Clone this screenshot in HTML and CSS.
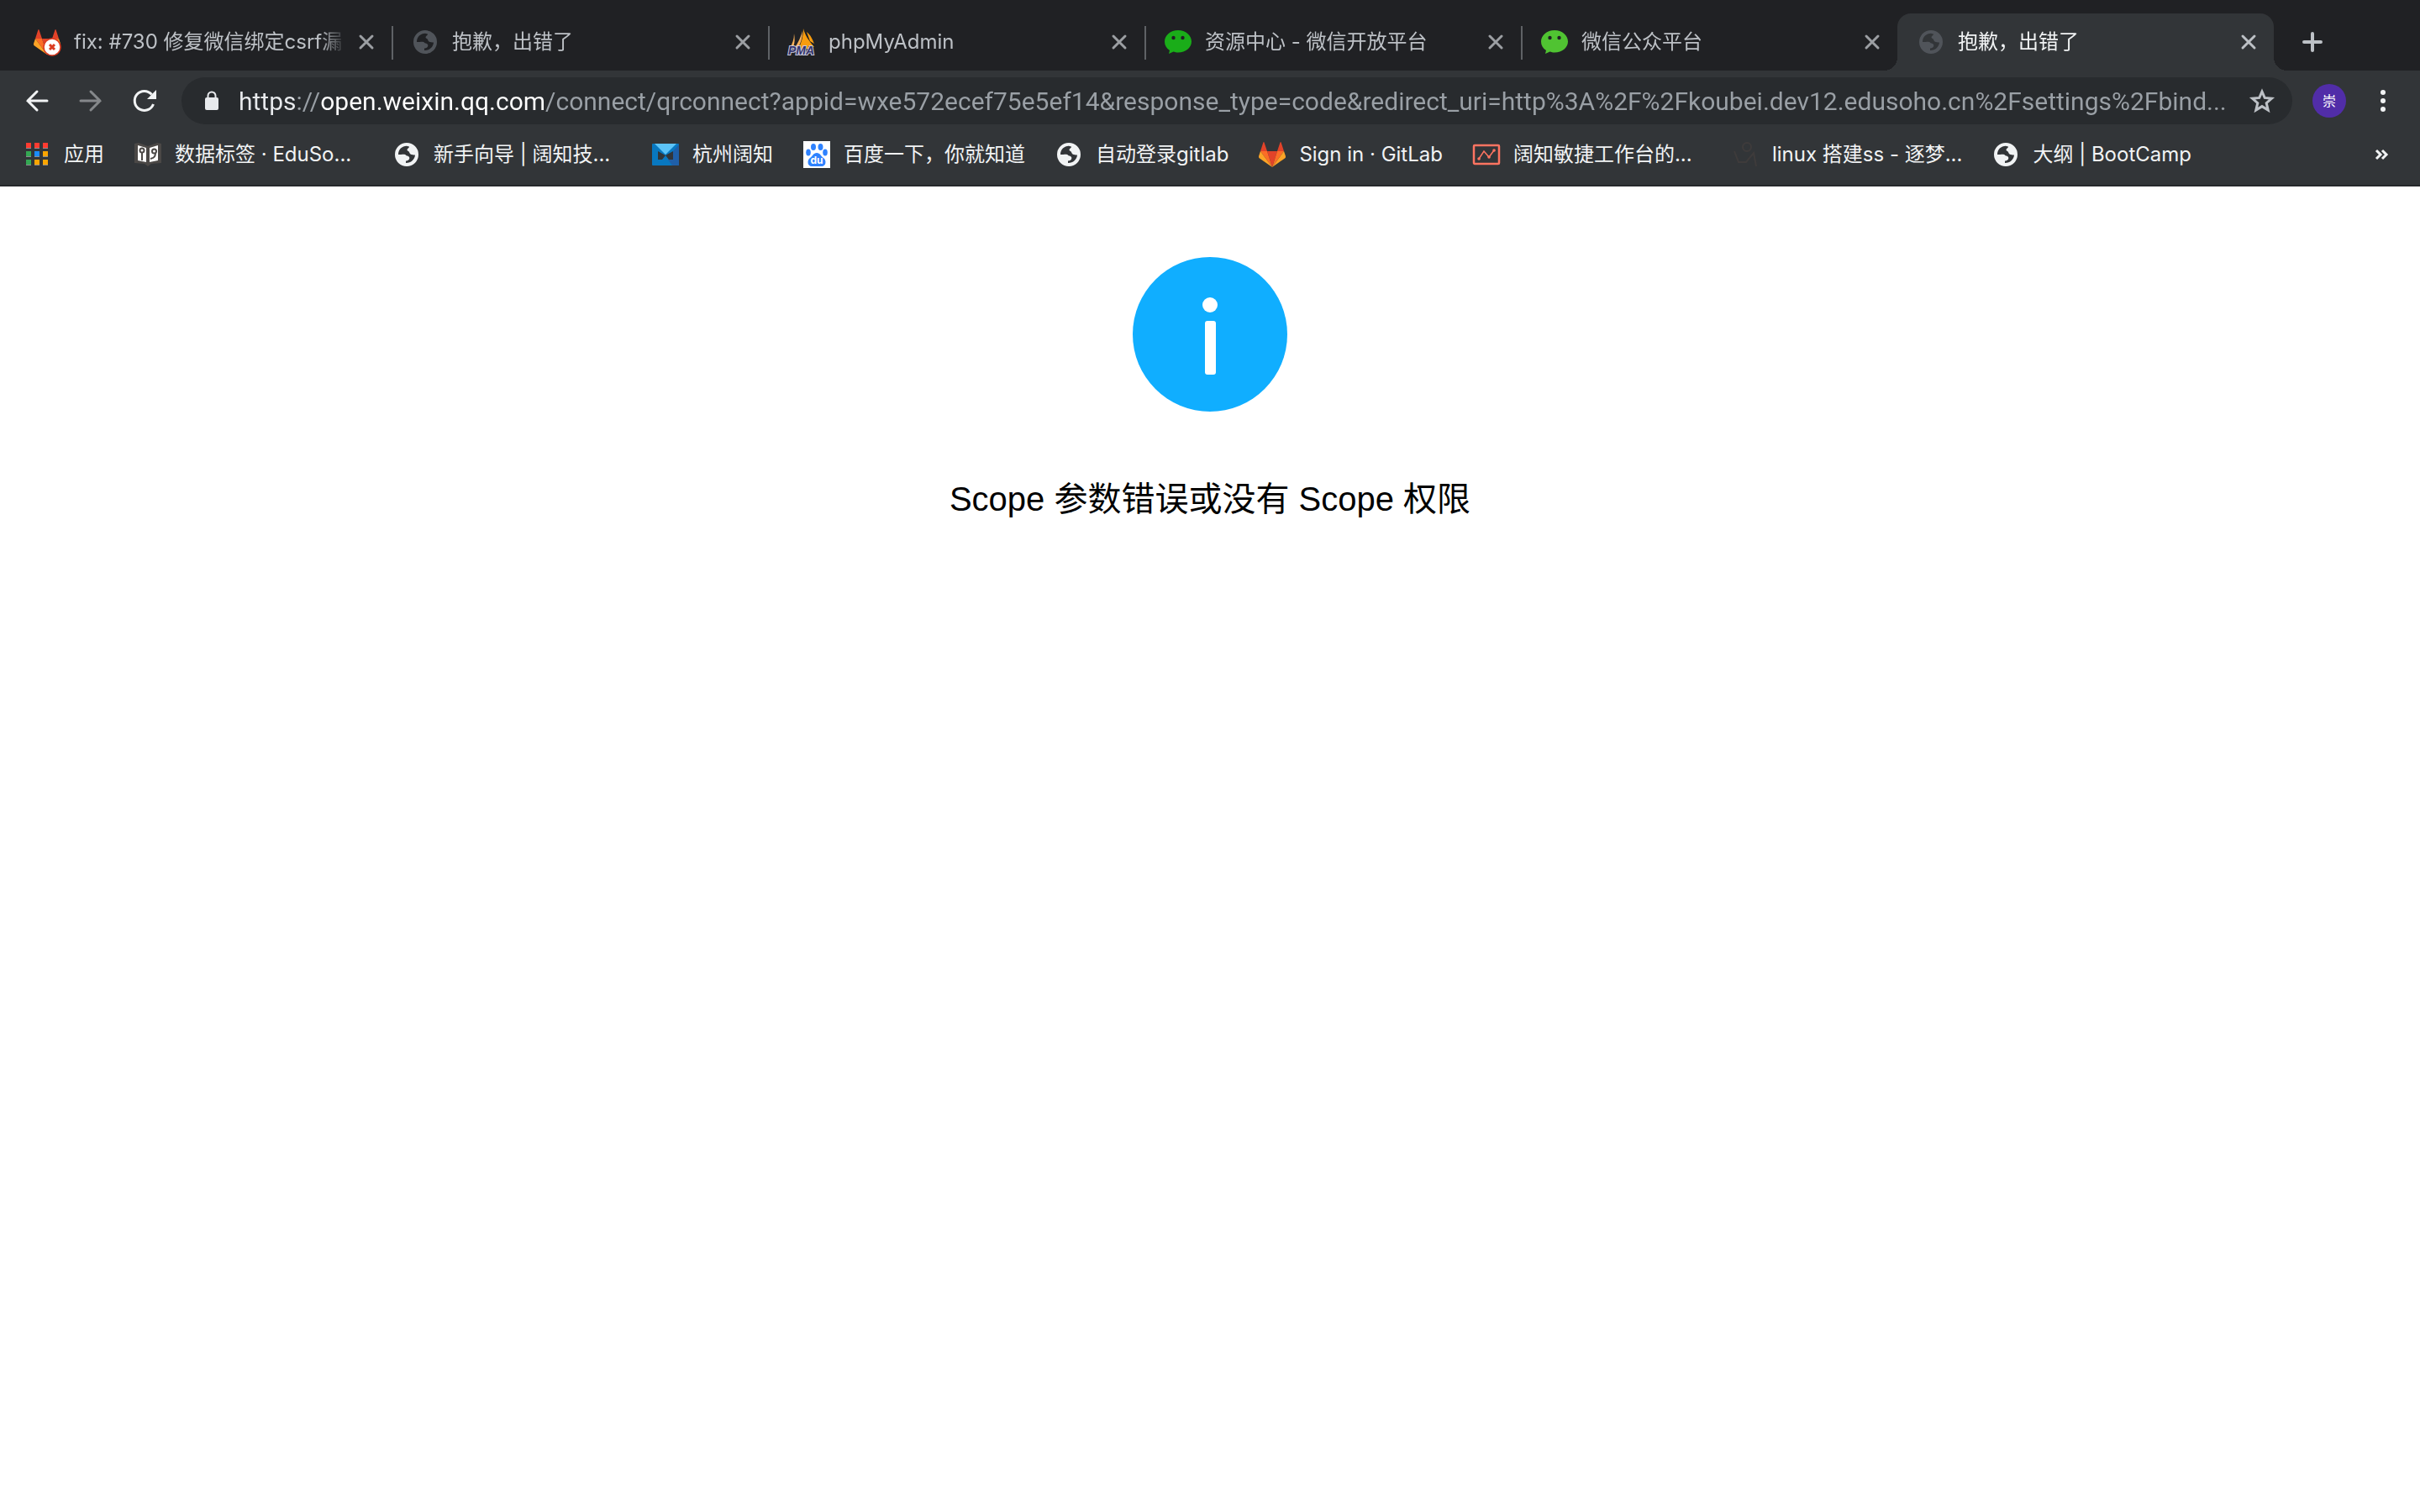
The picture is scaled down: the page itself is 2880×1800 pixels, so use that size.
FILE: index.html
```html
<!DOCTYPE html>
<html lang="zh-CN">
<head>
    <meta charset="UTF-8">
    <meta name="viewport" content="width=device-width, initial-scale=1.0">
    <title>抱歉，出错了</title>
    <link rel="stylesheet" href="styles.css">
</head>
<body>

<svg class="sprite" aria-hidden="true">
    <symbol id="close" viewBox="0 0 32 32">
        <path d="M9 9l14 14M23 9L9 23" fill="none" stroke="currentColor" stroke-width="3" stroke-linecap="round"/>
    </symbol>
    <symbol id="globe" viewBox="0 0 32 32">
        <path fill="currentColor" fill-rule="evenodd" d="M16 2a14 14 0 1 1 0 28a14 14 0 1 1 0-28zM6 16C6 10 10.500 5.800 16 5.800L19 6.500C19 8.500 16.500 8.500 16.500 10.500C16.500 12 18.500 11.500 19 13C19.500 15.500 21.500 16.500 26 16.500C25.500 22 21 26.200 15 26V23.500C18.500 23.500 20 21 19 19C18 17 15.500 18 15 16.500C14 15 10 16 6 16z"/>
    </symbol>
    <symbol id="gitlab" viewBox="0 0 32 32">
        <path fill="#e24329" d="M16 31L22 12H10z"/>
        <path fill="#fc6d26" d="M16 31L10 12H2zM16 31L22 12H30z"/>
        <path fill="#fca326" d="M2 12L0 18c0 1 0 2 1 2.500L16 31zM30 12L32 18c0 1 0 2-1 2.500L16 31z"/>
        <path fill="#e24329" d="M2 12H10L6.500 1.500C6.200.8 5.600.8 5.400 1.500zM30 12H22L25.500 1.500C25.800.8 26.400.8 26.600 1.500z"/>
    </symbol>
    <symbol id="wechat" viewBox="0 0 32 32">
        <path fill="currentColor" d="M16 2C7 2 0 8 0 15.500C0 20 2.300 23.500 6 26L5 30L10.500 27.500C12 28 14 28.500 16 28.500C25 28.500 32 22.800 32 15.500S25 2 16 2z"/>
        <circle cx="10.500" cy="11" r="2.200" fill="#202124"/>
        <circle cx="21.500" cy="11" r="2.200" fill="#202124"/>
    </symbol>
</svg>

<header class="browser">
    <nav class="tabs" aria-label="标签页">
        <div class="tab">
            <a class="tab-link" href="#">
                <svg class="icon" viewBox="0 0 32 32">
                    <use href="#gitlab"/>
                    <circle cx="22" cy="22" r="10" fill="#fff" stroke="#db3b21" stroke-width="1.500"/>
                    <path d="M19 19l6 6M25 19l-6 6" stroke="#db3b21" stroke-width="3"/>
                </svg>
                <span class="tab-title">fix: #730 修复微信绑定csrf漏</span>
            </a>
            <button class="close" aria-label="关闭"><svg class="icon"><use href="#close"/></svg></button>
        </div>
        <div class="tab">
            <a class="tab-link" href="#">
                <svg class="icon muted"><use href="#globe"/></svg>
                <span class="tab-title">抱歉，出错了</span>
            </a>
            <button class="close" aria-label="关闭"><svg class="icon"><use href="#close"/></svg></button>
        </div>
        <div class="tab">
            <a class="tab-link" href="#">
                <svg class="icon" viewBox="0 0 32 32">
                    <path fill="#f89c0e" d="M18 0C20 8 25 15 31 22L24 21L25 24H12C16 17 18 9 18 0zM22 4C27 8 29 13 31 18L26 15z"/>
                    <path fill="#fbb25a" d="M17 3C17 11 15 18 11 24H7C12 17 15 10 17 3zM7 6C7 13 5 18 2 23L6 22C8 17 8 12 7 6z"/>
                    <text class="pma" x="0" y="31">PMA</text>
                </svg>
                <span class="tab-title">phpMyAdmin</span>
            </a>
            <button class="close" aria-label="关闭"><svg class="icon"><use href="#close"/></svg></button>
        </div>
        <div class="tab">
            <a class="tab-link" href="#">
                <svg class="icon wechat"><use href="#wechat"/></svg>
                <span class="tab-title">资源中心 - 微信开放平台</span>
            </a>
            <button class="close" aria-label="关闭"><svg class="icon"><use href="#close"/></svg></button>
        </div>
        <div class="tab">
            <a class="tab-link" href="#">
                <svg class="icon wechat-light"><use href="#wechat"/></svg>
                <span class="tab-title">微信公众平台</span>
            </a>
            <button class="close" aria-label="关闭"><svg class="icon"><use href="#close"/></svg></button>
        </div>
        <div class="tab active">
            <a class="tab-link" href="#" aria-current="page">
                <svg class="icon muted"><use href="#globe"/></svg>
                <span class="tab-title">抱歉，出错了</span>
            </a>
            <button class="close" aria-label="关闭"><svg class="icon"><use href="#close"/></svg></button>
        </div>
        <button class="new-tab" aria-label="新标签页">
            <svg class="icon" viewBox="0 0 32 32"><path d="M16 6v20M6 16h20" stroke="currentColor" stroke-width="4" stroke-linecap="round"/></svg>
        </button>
    </nav>

    <div class="toolbar">
        <button class="tool" aria-label="后退">
            <svg class="icon" viewBox="0 0 32 32"><path d="M28 16H5M16 5L5 16L16 27" fill="none" stroke="currentColor" stroke-width="3" stroke-linecap="round"/></svg>
        </button>
        <button class="tool dim" aria-label="前进">
            <svg class="icon" viewBox="0 0 32 32"><path d="M4 16H27M16 5L27 16L16 27" fill="none" stroke="currentColor" stroke-width="3" stroke-linecap="round"/></svg>
        </button>
        <button class="tool" aria-label="重新加载">
            <svg class="icon" viewBox="0 0 32 32">
                <path d="M26.500 20A11.500 11.500 0 1 1 24.500 8.500" fill="none" stroke="currentColor" stroke-width="3"/>
                <path d="M30 3V14H19z" fill="currentColor"/>
            </svg>
        </button>
        <div class="omnibox">
            <svg class="icon lock" viewBox="0 0 32 32">
                <rect x="8" y="12" width="16" height="15" rx="2" fill="currentColor"/>
                <path d="M11.500 13V10a4.500 4.500 0 0 1 9 0V13" fill="none" stroke="currentColor" stroke-width="2"/>
            </svg>
            <input class="url" type="text" aria-label="地址栏" spellcheck="false" value="https://open.weixin.qq.com/connect/qrconnect?appid=wxe572ecef75e5ef14&amp;response_type=code&amp;redirect_uri=http%3A%2F%2Fkoubei.dev12.edusoho.cn%2Fsettings%2Fbind...">
            <button class="star" aria-label="添加书签">
                <svg class="icon" viewBox="0 0 32 32"><path d="M16 5L19.200 12.400L27.500 13.200L21.200 18.700L23.200 27L16 22.600L8.800 27L10.800 18.700L4.500 13.200L12.800 12.400z" fill="none" stroke="currentColor" stroke-width="3"/></svg>
            </button>
        </div>
        <button class="tool" aria-label="个人资料"><span class="avatar">崇</span></button>
        <button class="tool" aria-label="菜单">
            <svg class="icon" viewBox="0 0 32 32" fill="currentColor"><circle cx="16" cy="6" r="3"/><circle cx="16" cy="16" r="3"/><circle cx="16" cy="26" r="3"/></svg>
        </button>
    </div>

    <nav class="bookmarks" aria-label="书签">
        <a class="bookmark" href="#">
            <svg class="icon" viewBox="0 0 32 32">
                <path fill="#ff3b30" d="M3 2h6v6H3zM13 2h6v6H13zM23 2h6v6H23z"/>
                <path fill="#34a853" d="M3 12h6v6H3zM3 22h6v6H3z"/>
                <path fill="#1a8cff" d="M13 12h6v6H13z"/>
                <path fill="#fba500" d="M23 12h6v6H23zM13 22h6v6H13zM23 22h6v6H23z"/>
                <path fill="#8a8d90" d="M3 8h6v1H3zM13 8h6v1H13zM23 8h6v1H23zM3 18h6v1H3zM13 18h6v1H13zM23 18h6v1H23zM3 28h6v1H3zM13 28h6v1H13zM23 28h6v1H23z"/>
            </svg>
            <span>应用</span>
        </a>
        <a class="bookmark clipped" href="#">
            <svg class="icon" viewBox="0 0 32 32">
                <path fill="#4b4846" d="M0 3L5 2L16 6L27 2L32 3V26L20 27L16 30L12 27L0 26z"/>
                <path fill="#fff" d="M4 5L14 8V25L4 23zM18 8L28 5V23L18 25z"/>
                <path d="M9 13V23M25 13C25 18 24 20 19 21" fill="none" stroke="#4b4846" stroke-width="2"/>
                <circle cx="9" cy="11" r="2.500" fill="#fff" stroke="#4b4846" stroke-width="2"/>
                <circle cx="23.500" cy="12" r="2.500" fill="#fff" stroke="#4b4846" stroke-width="2"/>
            </svg>
            <span>数据标签 · EduSo...</span>
        </a>
        <a class="bookmark clipped" href="#">
            <svg class="icon"><use href="#globe"/></svg>
            <span>新手向导 | 阔知技...</span>
        </a>
        <a class="bookmark" href="#">
            <svg class="icon" viewBox="0 0 32 32">
                <rect y="3" width="32" height="26" rx="1" fill="#0878c0"/>
                <path fill="#1f5fa8" d="M32 4V29H24L19 22L25 12z"/>
                <path fill="#323538" d="M7 12L16 17L25 12V22H20L16 17L12 22H7z"/>
                <path fill="#5cc3f7" d="M3 3H29L16 16z"/>
            </svg>
            <span>杭州阔知</span>
        </a>
        <a class="bookmark" href="#">
            <svg class="icon" viewBox="0 0 32 32">
                <rect width="32" height="32" fill="#fff"/>
                <g fill="#2e82ff">
                    <ellipse cx="12" cy="7" rx="3" ry="4"/>
                    <ellipse cx="20.500" cy="7" rx="3" ry="4"/>
                    <ellipse cx="6" cy="13.500" rx="2.800" ry="4"/>
                    <ellipse cx="26" cy="13.500" rx="2.800" ry="4"/>
                    <path d="M16 14C20 14 21 18 24 20C28 23 27 30 22 30H10C5 30 4 23 8 20C11 18 12 14 16 14z"/>
                </g>
                <text class="du" x="16" y="27">du</text>
            </svg>
            <span>百度一下，你就知道</span>
        </a>
        <a class="bookmark" href="#">
            <svg class="icon"><use href="#globe"/></svg>
            <span>自动登录gitlab</span>
        </a>
        <a class="bookmark" href="#">
            <svg class="icon"><use href="#gitlab"/></svg>
            <span>Sign in · GitLab</span>
        </a>
        <a class="bookmark clipped" href="#">
            <svg class="icon" viewBox="0 0 32 32" fill="none" stroke="#ff7461">
                <rect x="1" y="5" width="30" height="22" rx="1" stroke-width="2.500"/>
                <path d="M7 21L13 12L19 19L25 11" stroke-width="1.500"/>
                <path d="M7 21h.1M19 19h.1M25 11h.1" stroke-width="3.500" stroke-linecap="round"/>
            </svg>
            <span>阔知敏捷工作台的...</span>
        </a>
        <a class="bookmark clipped" href="#">
            <svg class="icon" viewBox="0 0 32 32" fill="none" stroke="#3e3b3b" stroke-width="2">
                <circle cx="18" cy="7" r="5"/>
                <path d="M3 12L8 25H17L26 14L29 30"/>
            </svg>
            <span>linux 搭建ss - 逐梦...</span>
        </a>
        <a class="bookmark" href="#">
            <svg class="icon"><use href="#globe"/></svg>
            <span>大纲 | BootCamp</span>
        </a>
        <button class="tool more" aria-label="更多书签">
            <svg class="icon" viewBox="0 0 32 32"><path d="M8 11L13 16L8 21M15 11L20 16L15 21" fill="none" stroke="currentColor" stroke-width="3"/></svg>
        </button>
    </nav>
</header>

<main class="message">
    <svg class="info" viewBox="0 0 184 184" role="img" aria-label="提示">
        <circle cx="92" cy="92" r="92" fill="#10aeff"/>
        <circle cx="92" cy="57" r="9" fill="#fff"/>
        <rect x="86" y="76" width="13" height="64" rx="3" fill="#fff"/>
    </svg>
    <p class="message-text">Scope 参数错误或没有 Scope 权限</p>
</main>

</body>
</html>
```
FILE: styles.css
```css
* {
    box-sizing: border-box;
}
body {
    margin: 0;
    font-family: Inter, "Noto Sans CJK SC", sans-serif;
    font-size: 24px;
    line-height: 32px;
    background: #fff;
}
a {
    color: inherit;
    text-decoration: none;
}
button {
    display: flex;
    align-items: center;
    justify-content: center;
    padding: 0;
    border: none;
    background: none;
    color: inherit;
    font: inherit;
    cursor: pointer;
}
.sprite {
    display: none;
}
.icon {
    flex: none;
    width: 32px;
    height: 32px;
    overflow: visible;
}
.browser {
    background: #323538;
    color: #f1f3f4;
    border-bottom: 2px solid #26282b;
}

/* tab strip */
.tabs {
    display: flex;
    padding: 16px 18px 0;
    background: #202124;
    color: #bdc1c6;
}
.tab {
    position: relative;
    display: flex;
    align-items: center;
    gap: 8px;
    flex: 0 1 448px;
    min-width: 0;
    height: 68px;
    padding: 0 14px 0 24px;
}
.tab:first-child {
    padding-left: 22px;
}
.tab + .tab:not(.active)::before {
    content: "";
    position: absolute;
    left: 0;
    top: 15px;
    width: 2px;
    height: 40px;
    background: #5f6266;
}
.tab-link {
    display: flex;
    align-items: center;
    gap: 16px;
    flex: 1;
    min-width: 0;
}
.tab-title {
    flex: 1;
    overflow: hidden;
    white-space: nowrap;
    mask-image: linear-gradient(to left, transparent, #000 32px);
}
.close {
    color: #9c9fa3;
}
.tab.active {
    background: #323538;
    color: #f1f3f4;
    border-radius: 16px 16px 0 0;
}
.tab.active::before, .tab.active::after {
    content: "";
    position: absolute;
    bottom: 0;
    width: 16px;
    height: 16px;
}
.tab.active::before {
    right: 100%;
    background: radial-gradient(circle at 0 0, transparent 16px, #323538 16px);
}
.tab.active::after {
    left: 100%;
    background: radial-gradient(circle at 100% 0, transparent 16px, #323538 16px);
}
.tab.active .close {
    color: #bdc1c6;
}
.new-tab {
    width: 56px;
    height: 68px;
    margin-left: 18px;
}
.muted {
    color: #50545a;
}
.wechat {
    color: #1aad19;
}
.wechat-light {
    color: #50c332;
}
.pma {
    font: italic bold 14px "Liberation Sans", sans-serif;
    fill: #34346b;
    stroke: #c9c9dc;
    stroke-width: 2px;
    paint-order: stroke;
}
.du {
    font: bold 12px Inter, sans-serif;
    fill: #fff;
    text-anchor: middle;
}

/* address bar */
.toolbar {
    display: flex;
    align-items: center;
    gap: 8px;
    padding: 8px 16px;
}
.tool {
    flex: none;
    width: 56px;
    height: 56px;
}
.dim {
    color: #85888b;
}
.omnibox {
    display: flex;
    align-items: center;
    flex: 1;
    min-width: 0;
    height: 56px;
    margin: 0 8px;
    padding: 0 20px;
    border-radius: 28px;
    background: #282b2e;
}
.lock {
    color: #e8eaed;
}
.url {
    flex: 1;
    min-width: 0;
    height: 56px;
    margin-left: 16px;
    padding: 0;
    border: none;
    outline: none;
    font: 30px Roboto, "Noto Sans CJK SC", sans-serif;
    /* scheme and host are bright, the rest is grey */
    background: linear-gradient(to right, #e8eaed 70px, #9aa0a6 70px, #9aa0a6 96px, #fff 96px, #fff 364px, #9aa0a6 364px);
    background-clip: text;
    color: transparent;
}
.star {
    color: #bdc1c6;
}
.avatar {
    width: 40px;
    height: 40px;
    border-radius: 50%;
    background: #512da8;
    color: #fff;
    font-size: 16px;
    line-height: 40px;
}

/* bookmarks bar */
.bookmarks {
    display: flex;
    align-items: center;
    gap: 36px;
    padding: 0 16px 8px 28px;
}
.bookmark {
    display: flex;
    align-items: center;
    gap: 16px;
    white-space: nowrap;
}
.clipped {
    flex: 0 1 272px;
}
.more {
    margin-left: auto;
}

/* page content */
.message {
    display: flex;
    flex-direction: column;
    align-items: center;
    padding: 84px 32px;
}
.info {
    width: 184px;
    height: 184px;
}
.message-text {
    margin: 76px 0 0;
    font-family: "Liberation Sans", "Noto Sans CJK SC", sans-serif;
    font-size: 40px;
    line-height: 56px;
}
```
